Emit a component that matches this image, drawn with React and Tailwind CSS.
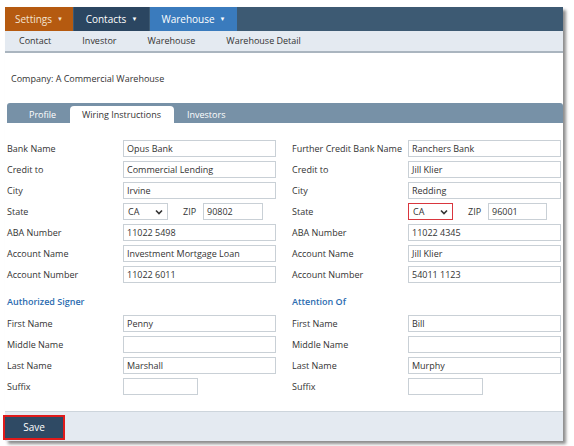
import React from "react";

function Field({ label, value = "", w = "w-[153px]" }) {
  return (
    <div className="flex items-center h-[17px]">
      <div className="w-[116px] shrink-0 whitespace-nowrap text-[9px] text-[#333]">{label}</div>
      <div className={`${w} h-[17px] border border-[#c9d0d6] bg-white px-[3px] text-[9px] leading-[15px] text-[#333] truncate`}>
        {value}
      </div>
    </div>
  );
}

function StateRow({ state, zip, red, zipW }) {
  return (
    <div className="flex items-center h-[17px]">
      <div className="w-[116px] shrink-0 text-[9px] text-[#333]">State</div>
      <div
        className={`w-[45px] h-[17px] flex items-center justify-between px-[4px] bg-white text-[9px] ${
          red ? "border border-[#d9363e]" : "border border-[#c9d0d6]"
        } text-[#333]`}
      >
        <span>{state}</span>
        <svg width="8" height="6" viewBox="0 0 8 6">
          <path d="M1 1.5 L4 4.5 L7 1.5" fill="none" stroke="#333" strokeWidth="1.6" />
        </svg>
      </div>
      <div className="ml-[15px] w-[20px] text-[9px] text-[#333]">ZIP</div>
      <div className={`${zipW} h-[17px] border border-[#c9d0d6] bg-white px-[3px] text-[9px] leading-[15px] text-[#333]`}>
        {zip}
      </div>
    </div>
  );
}

function Column({ top, header, people, state, zip, red, zipW }) {
  return (
    <div className="flex flex-col">
      <div className="flex flex-col gap-[4px]">
        {top.slice(0, 3).map((f) => (
          <Field key={f[0]} label={f[0]} value={f[1]} />
        ))}
        <StateRow state={state} zip={zip} red={red} zipW={zipW} />
        {top.slice(3).map((f) => (
          <Field key={f[0]} label={f[0]} value={f[1]} />
        ))}
      </div>
      <div className="mt-[12px] h-[14px] text-[9px] font-semibold text-[#2b6cb0]">{header}</div>
      <div className="mt-[6px] flex flex-col gap-[4px]">
        <Field label="First Name" value={people[0]} />
        <Field label="Middle Name" value={people[1]} />
        <Field label="Last Name" value={people[2]} />
        <Field label="Suffix" value="" w="w-[75px]" />
      </div>
    </div>
  );
}

export default function App() {
  return (
    <div
      className="w-[574px] h-[446px] bg-white pt-[7px] pl-[5px] overflow-hidden"
      style={{ fontFamily: '"Open Sans", "Liberation Sans", sans-serif' }}
    >
      <div className="w-[558px] h-[434px] flex flex-col bg-white shadow-[3px_3px_3px_rgba(0,0,0,0.45)]">
        <div className="h-[24px] flex bg-[#3d5a73] text-white text-[10px]">
          <div className="w-[68px] flex items-center justify-center gap-[5px] bg-[#b55a10] text-[#f3e3d2]">
            Settings <span className="text-[6px]">▼</span>
          </div>
          <div className="ml-[1px] w-[75px] flex items-center justify-center gap-[5px] bg-[#2b4661]">
            Contacts <span className="text-[6px]">▼</span>
          </div>
          <div className="ml-[1px] w-[87px] flex items-center justify-center gap-[5px] bg-[#3a7bbd]">
            Warehouse <span className="text-[6px]">▼</span>
          </div>
        </div>
        <div className="h-[22px] flex items-center bg-[#e4eaf1] border-b-2 border-[#aab5bf] text-[9px] text-[#333]">
          <span className="ml-[14px]">Contact</span>
          <span className="ml-[31px]">Investor</span>
          <span className="ml-[31px]">Warehouse</span>
          <span className="ml-[31px]">Warehouse Detail</span>
        </div>
        <div className="mt-[19px] ml-[6px] text-[9px] text-[#333] h-[14px] leading-[14px]">
          Company: A Commercial Warehouse
        </div>
        <div className="mt-[17px] ml-[2px] w-[556px] h-[20px] flex items-end bg-[#7791a7] rounded-t-[3px] text-[9px]">
          <div className="w-[63px] h-[17px] flex items-center pl-[22px] text-white">Profile</div>
          <div className="w-[104px] h-[17px] flex items-center pl-[12px] bg-white rounded-t-[4px] text-[#333]">
            Wiring Instructions
          </div>
          <div className="ml-[13px] h-[17px] flex items-center text-white">Investors</div>
        </div>
        <div className="mt-[17px] ml-[2px] flex gap-[16px]">
          <Column
            top={[
              ["Bank Name", "Opus Bank"],
              ["Credit to", "Commercial Lending"],
              ["City", "Irvine"],
              ["ABA Number", "11022 5498"],
              ["Account Name", "Investment Mortgage Loan"],
              ["Account Number", "11022 6011"],
            ]}
            header="Authorized Signer"
            people={["Penny", "", "Marshall"]}
            state="CA"
            zip="90802"
            zipW="w-[60px]"
          />
          <Column
            top={[
              ["Further Credit Bank Name", "Ranchers Bank"],
              ["Credit to", "Jill Klier"],
              ["City", "Redding"],
              ["ABA Number", "11022 4345"],
              ["Account Name", "Jill Klier"],
              ["Account Number", "54011 1123"],
            ]}
            header="Attention Of"
            people={["Bill", "", "Murphy"]}
            state="CA"
            zip="96001"
            red
            zipW="w-[59px]"
          />
        </div>
        <div className="mt-auto h-[30px] flex items-center bg-[#e4eaf1] border-t border-[#cdd5dc]">
          <button className="-ml-[2px] mt-[2px] w-[62px] h-[25px] border-2 border-[#e01b1b] bg-[#2f4a64] text-white text-[10px]">
            Save
          </button>
        </div>
      </div>
    </div>
  );
}
